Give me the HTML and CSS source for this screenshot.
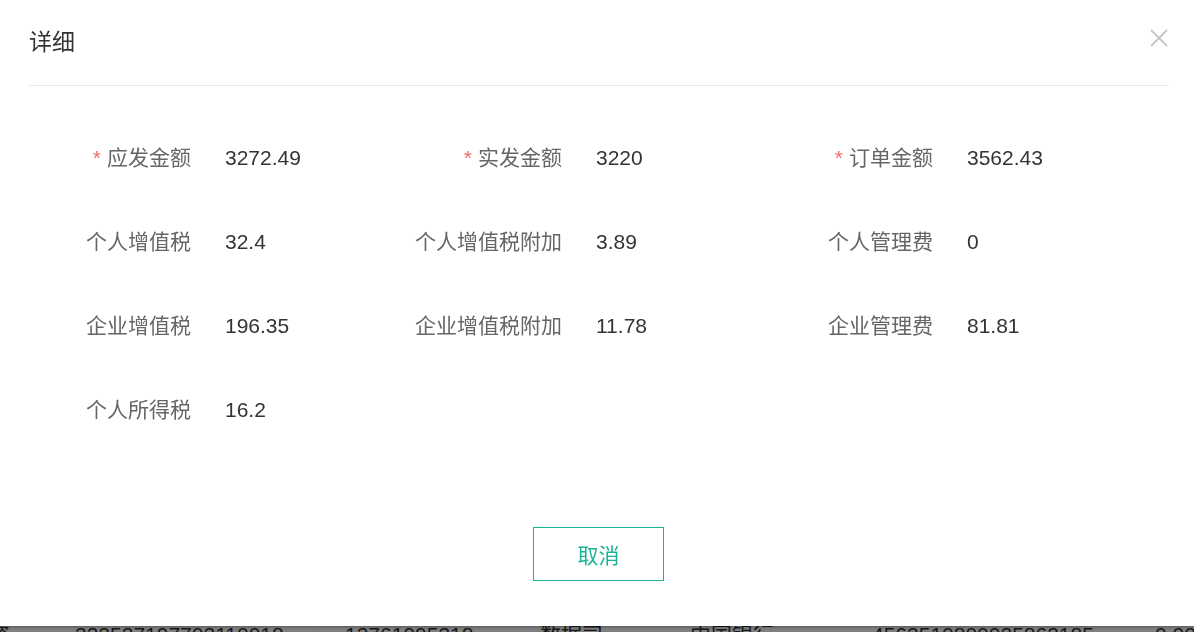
FILE: index.html
```html
<!DOCTYPE html>
<html lang="zh-CN">
<head>
  <meta charset="UTF-8">
  <meta name="viewport" content="width=device-width, initial-scale=1.0">
  <title>详细</title>
  <link rel="stylesheet" href="styles.css">
</head>
<body>
  <!-- page behind the dialog -->
  <div class="page">
    <div class="table-row">
      <span class="cell c-name">资</span>
      <span class="cell c-id">332527197702110018</span>
      <span class="cell c-phone">13761995318</span>
      <span class="cell c-dept">数据司</span>
      <span class="cell c-bank">中国银行</span>
      <span class="cell c-card">4563510800025863185</span>
      <span class="cell c-amount">0.00</span>
    </div>
  </div>

  <div class="mask"></div>

  <div class="dialog">
    <div class="dialog-header">
      <span class="dialog-title">详细</span>
      <button class="dialog-close" type="button" aria-label="关闭">
        <svg width="18" height="20" viewBox="0 0 18 20">
          <path d="M1 2 L17 18 M17 2 L1 18" stroke="#c8c8c8" stroke-width="2" fill="none"/>
        </svg>
      </button>
    </div>

    <div class="dialog-body">
      <div class="form-grid">
        <div class="form-item">
          <label class="item-label"><span class="required">*</span>应发金额</label>
          <span class="item-value">3272.49</span>
        </div>
        <div class="form-item">
          <label class="item-label"><span class="required">*</span>实发金额</label>
          <span class="item-value">3220</span>
        </div>
        <div class="form-item">
          <label class="item-label"><span class="required">*</span>订单金额</label>
          <span class="item-value">3562.43</span>
        </div>

        <div class="form-item">
          <label class="item-label">个人增值税</label>
          <span class="item-value">32.4</span>
        </div>
        <div class="form-item">
          <label class="item-label">个人增值税附加</label>
          <span class="item-value">3.89</span>
        </div>
        <div class="form-item">
          <label class="item-label">个人管理费</label>
          <span class="item-value">0</span>
        </div>

        <div class="form-item">
          <label class="item-label">企业增值税</label>
          <span class="item-value">196.35</span>
        </div>
        <div class="form-item">
          <label class="item-label">企业增值税附加</label>
          <span class="item-value">11.78</span>
        </div>
        <div class="form-item">
          <label class="item-label">企业管理费</label>
          <span class="item-value">81.81</span>
        </div>

        <div class="form-item">
          <label class="item-label">个人所得税</label>
          <span class="item-value">16.2</span>
        </div>
      </div>
    </div>

    <div class="dialog-footer">
      <button class="btn-cancel" type="button">取消</button>
    </div>
  </div>
</body>
</html>
```

FILE: styles.css
```css
* {
  margin: 0;
  padding: 0;
  box-sizing: border-box;
}

body {
  font-family: "Liberation Sans", "Noto Sans CJK SC", sans-serif;
  background-color: #ffffff;
  color: #333333;
  overflow: hidden;
  height: 632px;
}

/* table behind the mask */
.page {
  padding-top: 624px;
}

.table-row {
  display: flex;
  height: 8px;
  overflow: hidden;
  font-size: 21px;
  line-height: 21px;
  color: #333333;
  white-space: nowrap;
}

.cell {
  display: block;
  flex-shrink: 0;
}

.c-name { width: 86px; margin-left: -11px; }
.c-id { width: 243px; border-right: 1px solid #f2f2f2; }
.c-phone { width: 222px; padding-left: 27px; }
.c-dept { width: 150px; }
.c-bank { width: 182px; }
.c-card { width: 283px; }
.c-amount { width: 40px; }

.mask {
  position: fixed;
  inset: 0;
  background-color: rgba(0, 0, 0, 0.5);
}

/* dialog */
.dialog {
  position: fixed;
  top: 0;
  left: 0;
  right: 0;
  height: 626px;
  background-color: #ffffff;
  box-shadow: 0 1px 3px rgba(0, 0, 0, 0.35);
}

.dialog-header {
  position: relative;
  margin: 0 25px 0 29px;
  padding: 27px 0 28px;
  border-bottom: 1px solid #e8e8e8;
}

.dialog-title {
  display: block;
  font-size: 23px;
  line-height: 30px;
  color: #333333;
}

.dialog-close {
  position: absolute;
  top: 28px;
  right: 1px;
  width: 18px;
  height: 20px;
  border: none;
  background: none;
  cursor: pointer;
}

.dialog-close svg {
  display: block;
}

.dialog-body {
  padding: 57px 0 0 31px;
}

.form-grid {
  display: grid;
  grid-template-columns: 371px 371px 371px;
  row-gap: 54px;
}

.form-item {
  display: flex;
  align-items: center;
  height: 30px;
  font-size: 21px;
  line-height: 30px;
}

.item-label {
  width: 160px;
  text-align: right;
  color: #666666;
  white-space: nowrap;
}

.required {
  color: #f56c6c;
  margin-right: 6px;
}

.item-value {
  margin-left: 34px;
  color: #333333;
}

.dialog-footer {
  display: flex;
  justify-content: center;
  padding: 102px 0 0 3px;
}

.btn-cancel {
  width: 131px;
  height: 54px;
  background-color: #ffffff;
  border: 1px solid #1ab394;
  color: #1ab394;
  font-family: "Liberation Sans", "Noto Sans CJK SC", sans-serif;
  font-size: 21px;
  cursor: pointer;
}
```
